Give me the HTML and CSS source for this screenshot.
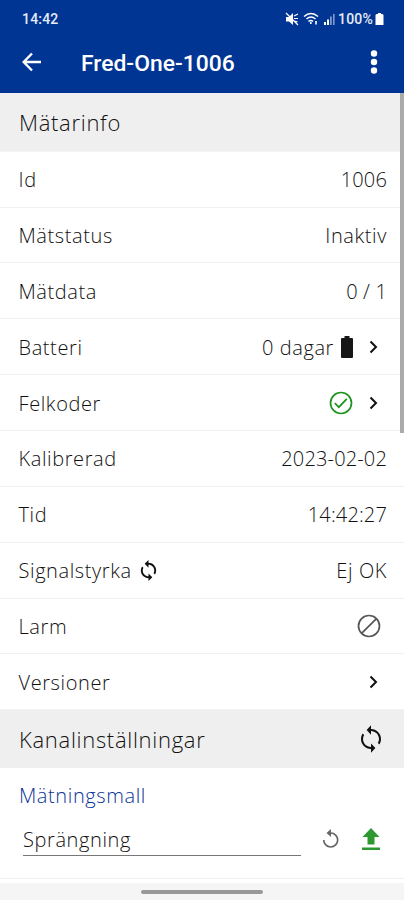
FILE: index.html
```html
<!DOCTYPE html>
<html lang="sv">
<head>
    <meta charset="UTF-8">
    <meta name="viewport" content="width=device-width, initial-scale=1.0">
    <title>Fred-One-1006</title>
    <link rel="stylesheet" href="styles.css">
</head>

<body>
    <!-- Status bar and title bar -->
    <header class="top">
        <div class="status-bar">
            <span>14:42</span>
            <div class="status-icons">
                <svg width="14" height="14" viewBox="0 0 14 14" fill="#fff">
                    <path d="M1 5h3l4-4v12L4 9.500H1z"/>
                    <path d="M1 1l12 12M9 4l4-2M9 6.500h4M9.500 9l3 1" stroke="#fff" stroke-width="1.200"/>
                </svg>
                <svg width="16" height="14" viewBox="0 0 16 14" fill="none" stroke="#fff" stroke-width="1.500">
                    <path d="M1 4.500Q8-1.500 15 4.500M3.500 7Q8 3 12.500 7M5.500 9.500Q8 7.500 10 9.500"/>
                    <path d="M7.800 10v2M13 9v3.500" stroke-width="1.600"/>
                </svg>
                <svg width="12" height="14" viewBox="0 0 12 14" fill="#fff">
                    <path d="M1 10h2v3H1zM4 7.500h2V13H4z"/>
                    <path d="M7 4.500h1.800V13H7zM10 2h1.600v11H10z" opacity="0.500"/>
                </svg>
                <span class="percent">100%</span>
                <svg width="9" height="14" viewBox="0 0 9 14" fill="#fff">
                    <path d="M3 1h3v1h1.500l1 1v10H.500V3l1-1H3z"/>
                </svg>
            </div>
        </div>
        <div class="title-bar">
            <svg class="back" width="20" height="20" viewBox="0 0 20 20" fill="none" stroke="#fff" stroke-width="2.400">
                <path d="M19 10H2M10 1.500L1.700 10l8.300 8.500"/>
            </svg>
            <h1>Fred-One-1006</h1>
            <svg width="8" height="24" viewBox="0 0 8 24" fill="#fff">
                <circle cx="4" cy="3.500" r="3.200"/>
                <circle cx="4" cy="12" r="3.200"/>
                <circle cx="4" cy="20.500" r="3.200"/>
            </svg>
        </div>
    </header>

    <main>
        <h2 class="section first">Mätarinfo</h2>

        <div class="row"><span>Id</span><span class="number">1006</span></div>
        <div class="row"><span>Mätstatus</span><span>Inaktiv</span></div>
        <div class="row"><span>Mätdata</span><span class="number">0 / 1</span></div>
        <div class="row link">
            <span>Batteri</span>
            <span class="value">
                0 dagar
                <svg class="battery" width="12" height="22" viewBox="0 0 12 22" fill="#161616">
                    <path d="M3.500 0h5v2H11q1 0 1 1v18q0 1-1 1H1q-1 0-1-1V3q0-1 1-1h2.500z"/>
                </svg>
                <svg class="chevron" width="9" height="14" viewBox="0 0 9 14"><path d="M1.500 1.500L7 7l-5.500 5.500"/></svg>
            </span>
        </div>
        <div class="row link">
            <span>Felkoder</span>
            <span class="value">
                <svg width="24" height="24" viewBox="0 0 24 24" fill="none" stroke="#1b931f" stroke-width="1.700">
                    <circle cx="12" cy="12" r="10.500"/>
                    <path d="M5.800 12.200l4 4 8-8.300"/>
                </svg>
                <svg class="chevron" width="9" height="14" viewBox="0 0 9 14"><path d="M1.500 1.500L7 7l-5.500 5.500"/></svg>
            </span>
        </div>
        <div class="row"><span>Kalibrerad</span><span class="number">2023-02-02</span></div>
        <div class="row"><span>Tid</span><span class="number">14:42:27</span></div>
        <div class="row">
            <span class="label">
                Signalstyrka
                <svg width="23" height="23" viewBox="0 0 24 24" fill="#111">
                    <path d="M12 4V1L8 5l4 4V6c3.310 0 6 2.690 6 6 0 1.010-.250 1.970-.700 2.800l1.460 1.460C19.540 15.030 20 13.570 20 12c0-4.420-3.580-8-8-8zm0 14c-3.310 0-6-2.690-6-6 0-1.010.250-1.970.700-2.800L5.240 7.740C4.460 8.970 4 10.430 4 12c0 4.420 3.580 8 8 8v3l4-4-4-4v3z"/>
                </svg>
            </span>
            <span>Ej OK</span>
        </div>
        <div class="row alarm">
            <span>Larm</span>
            <svg width="24" height="24" viewBox="0 0 24 24" fill="none" stroke="#555" stroke-width="1.700">
                <circle cx="12" cy="12" r="10.500"/>
                <path d="M4.800 19.200L19.200 4.800"/>
            </svg>
        </div>
        <div class="row link">
            <span>Versioner</span>
            <svg class="chevron" width="9" height="14" viewBox="0 0 9 14"><path d="M1.500 1.500L7 7l-5.500 5.500"/></svg>
        </div>

        <h2 class="section">
            Kanalinställningar
            <svg width="30" height="30" viewBox="0 0 24 24" fill="#111">
                <path d="M12 4V1L8.500 4.800 12 8.500V5.600c3.500 0 6.400 2.900 6.400 6.400 0 1.200-.300 2.200-.900 3.200l1.200 1.200C19.500 15.100 20 13.600 20 12c0-4.420-3.580-8-8-8zm0 14.400c-3.500 0-6.400-2.900-6.400-6.400 0-1.200.300-2.200.900-3.200L5.300 7.600C4.500 8.900 4 10.400 4 12c0 4.420 3.580 8 8 8v3l3.500-3.800L12 15.500z"/>
            </svg>
        </h2>

        <!-- Measurement template -->
        <div class="template">
            <label>Mätningsmall</label>
            <div class="template-row">
                <div class="field">Sprängning</div>
                <svg class="undo" width="18" height="20" viewBox="0 0 18 20">
                    <path d="M1.700 11a7 7 0 1 0 7-7" fill="none" stroke="#666" stroke-width="1.700"/>
                    <path d="M9 0v8L4.500 4z" fill="#666"/>
                </svg>
                <svg class="upload" width="18" height="22" viewBox="0 0 18 22" fill="#2c982f">
                    <path d="M9 0l8.500 9h-5v7.500h-7V9h-5zM0 19.500h18V22H0z"/>
                </svg>
            </div>
        </div>
    </main>

    <div class="scrollbar"></div>

    <footer class="nav-bar">
        <div class="pill"></div>
    </footer>
</body>
</html>
```

FILE: styles.css
```css
* {
    box-sizing: border-box;
}

body {
    margin: 0;
    height: 900px;
    display: flex;
    flex-direction: column;
    overflow: hidden;
    background: #fff;
    color: #111;
    font-family: "Open Sans", sans-serif;
    font-size: 20px;
    font-weight: 300;
    letter-spacing: 0.6px;
}

svg {
    flex-shrink: 0;
    display: block;
}

/* Top: status bar and title */
.top {
    height: 93px;
    background: #003594;
    color: #fff;
    font-family: Roboto, sans-serif;
    letter-spacing: 0;
}

.status-bar {
    height: 38px;
    padding: 0 20px 0 22px;
    display: flex;
    justify-content: space-between;
    align-items: center;
    color: #e6ebf5;
    font-size: 14px;
    font-weight: 500;
    letter-spacing: 0.2px;
}

.status-icons {
    display: flex;
    align-items: center;
    gap: 4px;
}

.percent {
    margin-left: -1px;
    margin-right: -2px;
}

.title-bar {
    height: 48px;
    padding: 0 26px 0 22px;
    display: flex;
    align-items: center;
}

.title-bar h1 {
    flex: 1;
    margin: 2px 0 0 39px;
    font-size: 22.900px;
    font-weight: 500;
}

/* Sections and rows */
.section {
    height: 57.700px;
    margin: 0;
    padding: 0 18px 0 19px;
    display: flex;
    justify-content: space-between;
    align-items: center;
    background: #efefef;
    font-size: 22px;
    font-weight: 300;
    letter-spacing: 0.700px;
}

.section.first {
    height: 58.700px;
    padding-top: 1px;
    border-bottom: 1px solid #f4f4f4;
}

.row {
    height: 55.860px;
    padding: 1px 17px 0 18.500px;
    display: flex;
    justify-content: space-between;
    align-items: center;
    border-bottom: 1px solid #f1f1f1;
}

.row.link {
    padding-right: 26px;
}

.row.alarm {
    padding-right: 23px;
}

.number {
    letter-spacing: 0.150px;
}

.value,
.label {
    display: flex;
    align-items: center;
}

.label {
    gap: 5px;
}

.value {
    gap: 16px;
}

.battery {
    margin-left: -9px;
}

.chevron {
    fill: none;
    stroke: #111;
    stroke-width: 2;
}

/* Template picker */
.template {
    height: 111px;
    padding: 14px 24px 0 19px;
    border-bottom: 1px solid #f1f1f1;
}

.template label {
    display: block;
    line-height: 28px;
    color: #0b3597;
}

.template-row {
    display: flex;
    align-items: center;
    padding-left: 4px;
}

.field {
    width: 278px;
    height: 34px;
    margin-top: 12px;
    line-height: 35px;
    border-bottom: 1px solid #777;
}

.undo {
    margin: 13px auto 0 21px;
}

.upload {
    margin-top: 12px;
}

/* Overlays the right edge of the list */
.scrollbar {
    position: absolute;
    top: 93px;
    right: 0;
    width: 4px;
    height: 340px;
    background: #aaa;
}

.nav-bar {
    margin-top: auto;
    height: 17px;
    display: flex;
    justify-content: center;
    align-items: center;
    background: #f5f5f5;
}

.pill {
    width: 122px;
    height: 4px;
    border-radius: 2px;
    background: #999;
}
```
